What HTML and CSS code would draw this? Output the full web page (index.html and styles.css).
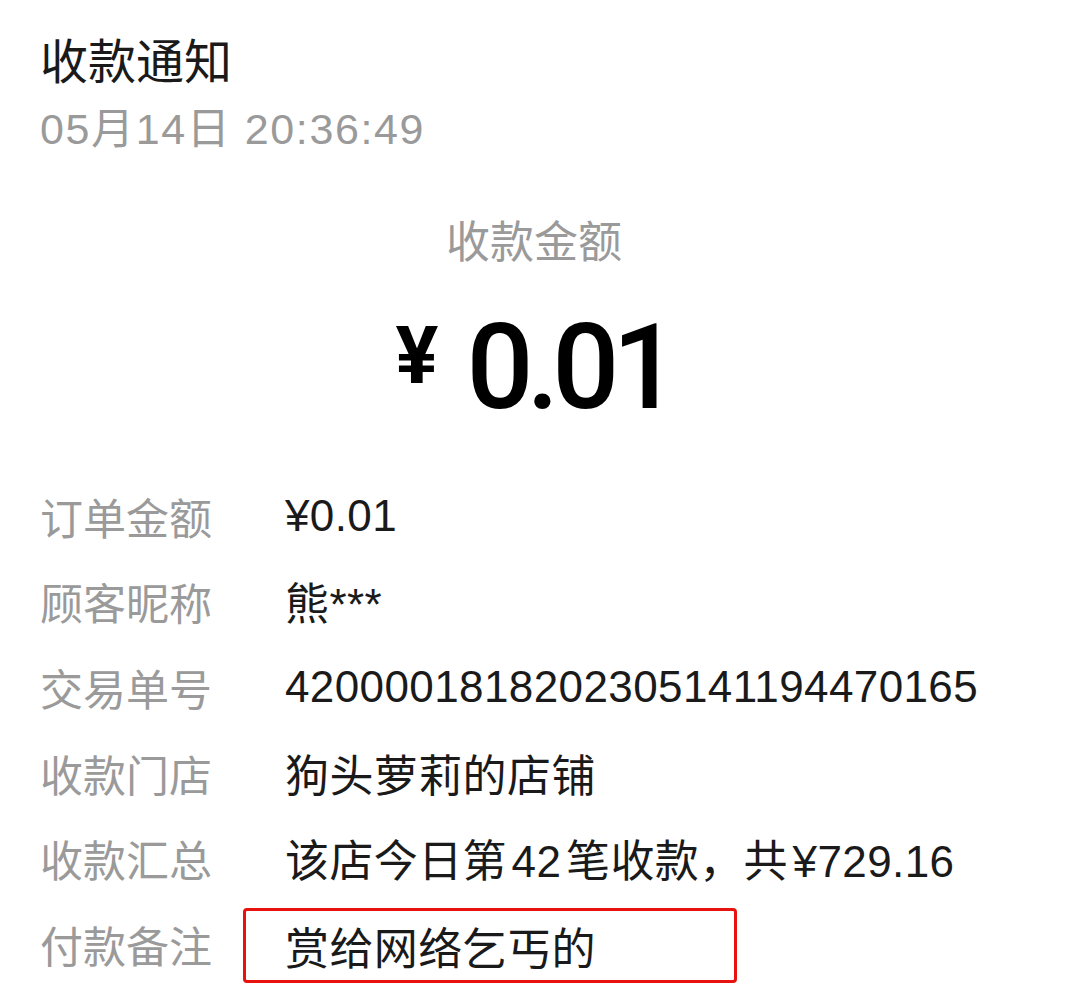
FILE: index.html
```html
<!DOCTYPE html>
<html lang="zh-CN">
<head>
    <meta charset="UTF-8">
    <meta name="viewport" content="width=device-width, initial-scale=1.0">
    <title>收款通知</title>
    <link rel="stylesheet" href="styles.css">
</head>
<body>
    <div class="notice">
        <div class="header">
            <h1>收款通知</h1>
            <div class="time">05月14日 20:36:49</div>
        </div>

        <div class="amount-box">
            <div class="amount-label">收款金额</div>
            <div class="amount"><span class="yen">¥</span><span class="num">0.01</span></div>
        </div>

        <div class="details">
            <div class="row">
                <span class="label">订单金额</span>
                <span class="value">¥0.01</span>
            </div>
            <div class="row">
                <span class="label">顾客昵称</span>
                <span class="value">熊***</span>
            </div>
            <div class="row">
                <span class="label">交易单号</span>
                <span class="value">4200001818202305141194470165</span>
            </div>
            <div class="row">
                <span class="label">收款门店</span>
                <span class="value">狗头萝莉的店铺</span>
            </div>
            <div class="row">
                <span class="label">收款汇总</span>
                <span class="value tight">该店今日第 42 笔收款，共 ¥729.16</span>
            </div>
            <div class="row">
                <span class="label">付款备注</span>
                <span class="value marked">赏给网络乞丐的</span>
            </div>
        </div>
    </div>
</body>
</html>
```

FILE: styles.css
```css
body {
    margin: 0;
    background: #fff;
    font-family: "Liberation Sans", "Noto Sans CJK SC", sans-serif;
    color: #111;
}
.notice {
    padding: 34px 0 0 40px;
    width: 1040px;
    height: 953px;
    overflow: hidden;
}
.header h1 {
    margin: 0;
    font-size: 48px;
    font-weight: 400;
    line-height: 58px;
    color: #1a1a1a;
}
.time {
    font-size: 43px;
    letter-spacing: 1.6px;
    line-height: 58px;
    color: #9a9a9a;
    margin-top: 8px;
}
.amount-box {
    margin: 0 12px 0 -40px;
    text-align: center;
    padding-top: 57px;
}
.amount-label {
    font-size: 44px;
    line-height: 56px;
    color: #9a9a9a;
}
.amount {
    margin-top: 32px;
    display: flex;
    justify-content: center;
    align-items: baseline;
    gap: 28px;
    font-family: Roboto, "Liberation Sans", sans-serif;
    font-weight: 500;
    color: #000;
    line-height: 130px;
}
.yen {
    font-size: 80px;
    font-weight: 700;
    position: relative;
    top: -25px;
}
.num {
    font-size: 118px;
    letter-spacing: -7px;
}
.details {
    margin-top: 27px;
}
.row {
    display: flex;
    align-items: center;
    height: 85.6px;
    font-size: 43px;
}
.label {
    width: 245px;
    flex-shrink: 0;
    color: #9a9a9a;
}
.value {
    font-size: 44px;
    letter-spacing: 0.4px;
    color: #1a1a1a;
    white-space: nowrap;
}
.tight {
    word-spacing: -8px;
}
.marked {
    box-sizing: border-box;
    width: 494px;
    margin: 4px 0 0 -42px;
    padding: 3px 0 2px 39px;
    border: 3px solid #e8130f;
    border-radius: 4px;
}
```
